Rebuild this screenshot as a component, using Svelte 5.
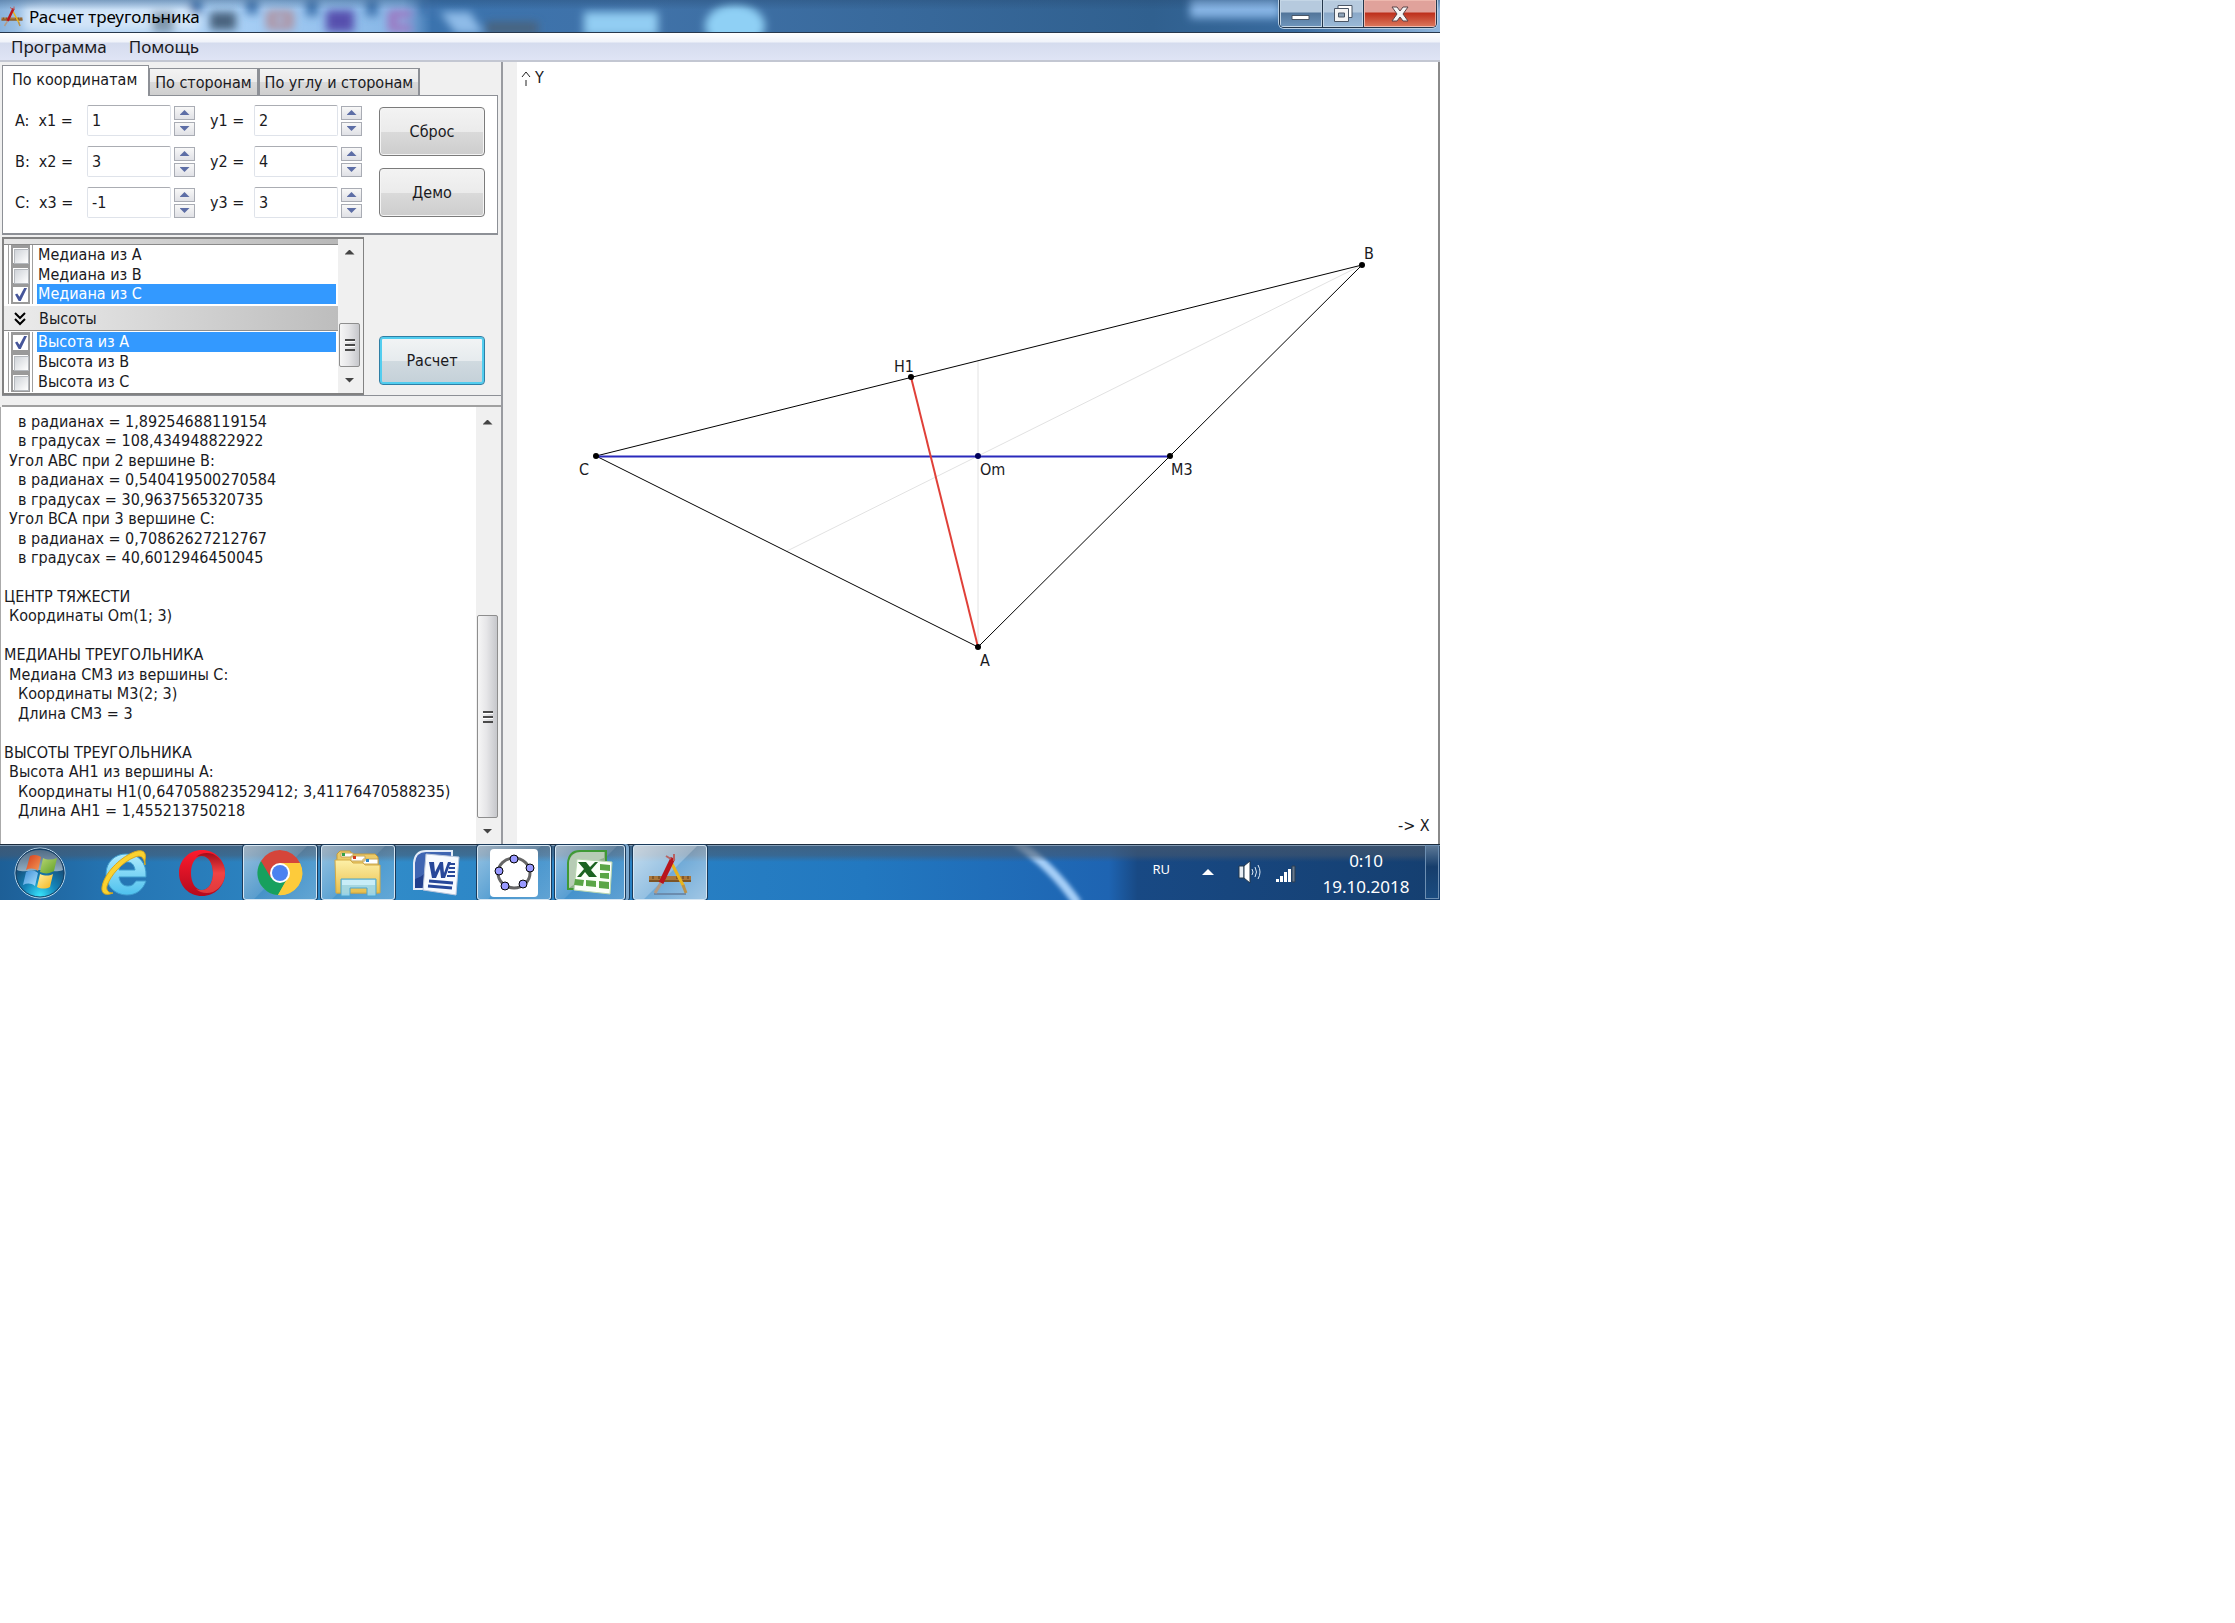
<script>
  const points = [
    { name: 'A', index: 1, x: '1', y: '2' },
    { name: 'B', index: 2, x: '3', y: '4' },
    { name: 'C', index: 3, x: '-1', y: '3' }
  ];

  const medians = [
    { text: 'Медиана из A', on: false },
    { text: 'Медиана из B', on: false },
    { text: 'Медиана из C', on: true }
  ];

  const heights = [
    { text: 'Высота из A', on: true },
    { text: 'Высота из B', on: false },
    { text: 'Высота из C', on: false }
  ];

  const report = [
    [2, 'в радианах = 1,89254688119154'],
    [2, 'в градусах = 108,434948822922'],
    [1, 'Угол ABC при 2 вершине B:'],
    [2, 'в радианах = 0,540419500270584'],
    [2, 'в градусах = 30,9637565320735'],
    [1, 'Угол BCA при 3 вершине C:'],
    [2, 'в радианах = 0,70862627212767'],
    [2, 'в градусах = 40,6012946450045'],
    [0, ''],
    [0, 'ЦЕНТР ТЯЖЕСТИ'],
    [1, 'Координаты Om(1; 3)'],
    [0, ''],
    [0, 'МЕДИАНЫ ТРЕУГОЛЬНИКА'],
    [1, 'Медиана CM3 из вершины C:'],
    [2, 'Координаты M3(2; 3)'],
    [2, 'Длина CM3 = 3'],
    [0, ''],
    [0, 'ВЫСОТЫ ТРЕУГОЛЬНИКА'],
    [1, 'Высота AH1 из вершины A:'],
    [2, 'Координаты H1(0,647058823529412; 3,41176470588235)'],
    [2, 'Длина AH1 = 1,455213750218']
  ];

  const dots = [
    { x: 596, y: 455, label: 'C', lx: 579, ly: 474 },
    { x: 911, y: 376, label: 'H1', lx: 894, ly: 371 },
    { x: 978, y: 455, label: 'Om', lx: 980, ly: 474 },
    { x: 978, y: 646, label: 'A', lx: 980, ly: 665 },
    { x: 1362, y: 264, label: 'B', lx: 1364, ly: 258 },
    { x: 1170, y: 455, label: 'M3', lx: 1171, ly: 474 }
  ];
</script>

{#snippet ladder()}
  <path d="M3 27h42v6H3z" fill="#a9773c" />
  <path d="M3 31h42v2H3z" fill="#7c5426" />
  <path d="M7 27v3M13 27v3M19 27v3M31 27v3M37 27v3M42 27v3" stroke="#5e3d18" stroke-width="1" />
  <path d="M26 15L38 38" stroke="#e9b41c" stroke-width="3" />
  <path d="M37 36l3 8" stroke="#b9914a" stroke-width="3" />
  <path d="M27 9L15 34" stroke="#b8151d" stroke-width="5" />
  <path d="M15 34l-6 10" stroke="#b39b86" stroke-width="3" />
  <path d="M20 7l5 3M28 5v7" stroke="#b86262" stroke-width="2" />
{/snippet}

{#snippet spin(name)}
  <span class="spin">
    <button type="button" aria-label={`${name} +`}><i class="up"></i></button>
    <button type="button" aria-label={`${name} −`}><i class="down"></i></button>
  </span>
{/snippet}

{#snippet checkRow(item)}
  <label class="check" class:on={item.on}>
    <span class="box"><input type="checkbox" checked={item.on} /></span>
    <span class="name">{item.text}</span>
  </label>
{/snippet}

<div class="page">
  <div class="screen">
    <header class="title">
      <svg class="wall" viewBox="0 0 1440 32" preserveAspectRatio="none" aria-hidden="true">
        <defs>
          <linearGradient id="sky">
            <stop offset="0" stop-color="#8ab3dc" />
            <stop offset="0.03" stop-color="#b3d2f1" />
            <stop offset="0.16" stop-color="#a9d0f6" />
            <stop offset="0.28" stop-color="#86b6e6" />
            <stop offset="0.3" stop-color="#3b73ae" />
            <stop offset="0.45" stop-color="#4072a8" />
            <stop offset="0.8" stop-color="#30608f" />
            <stop offset="0.9" stop-color="#386a9e" />
            <stop offset="1" stop-color="#8fb5dc" />
          </linearGradient>
          <linearGradient id="shade" x2="0" y2="1">
            <stop offset="0" stop-color="#274b73" stop-opacity="0.4" />
            <stop offset="0.3" stop-color="#274b73" stop-opacity="0" />
          </linearGradient>
          <filter id="soft" x="-5%" y="-60%" width="110%" height="220%"><feGaussianBlur stdDeviation="4" /></filter>
        </defs>
        <path d="M0 0h1440v32H0z" fill="url(#sky)" />
        <g filter="url(#soft)">
          <path d="M24 6h176v24H24z" fill="#d3e5f8" />
          <path d="M152 12h22v20h-22z" fill="#8199ae" />
          <path d="M210 12h26v18h-26z" fill="#48647e" />
          <path d="M270 14h20v12h-20z" fill="none" stroke="#b08f9c" stroke-width="7" />
          <path d="M326 10h28v22h-28z" fill="#564fae" />
          <path d="M412 14h-20v14h20" fill="none" stroke="#9d74c0" stroke-width="8" />
          <path d="M190 0h12v14h-12zM246 0h12v14h-12zM306 0h12v16h-12zM366 0h12v16h-12zM420 0h14v14h-14z" fill="#3f73ad" />
          <path d="M440 12h30l14 22h-28z" fill="#8ebbe8" />
          <path d="M486 22h52v12h-52z" fill="#4a647e" />
          <path d="M584 12h74v24h-74z" fill="#92cdf3" />
          <ellipse cx="735" cy="26" rx="30" ry="22" fill="#8fd0f5" />
          <path d="M1190 -4h90v22h-90z" fill="#86b4e4" />
        </g>
        <path d="M0 0h1440v32H0z" fill="url(#shade)" />
      </svg>
      <svg class="app" viewBox="0 0 48 48" aria-hidden="true">{@render ladder()}</svg>
      <h1>Расчет треугольника</h1>
      <div class="caption">
        <button type="button" class="min" aria-label="Свернуть">
          <svg viewBox="0 0 22 20"><path d="M2 11.500h17v4H2z" fill="#fff" stroke="#4a5666" /></svg>
        </button>
        <button type="button" class="max" aria-label="Восстановить">
          <svg viewBox="0 0 22 20">
            <path d="M6 1.500h14v12H6z" fill="#fff" stroke="#4a5666" />
            <path d="M2.500 4.500h14v13h-14z" fill="#f4f4f4" stroke="#4a5666" />
            <path d="M6.500 9h6v4h-6z" fill="#8ea3b8" stroke="#4a5666" />
          </svg>
        </button>
        <button type="button" class="close" aria-label="Закрыть">
          <svg viewBox="0 0 22 20"><path d="M3 3h5l3 4 3-4h5l-5 7 5 7h-5l-3-4-3 4H3l5-7z" fill="#f4f4f4" stroke="#5c4448" /></svg>
        </button>
      </div>
    </header>

    <nav class="menu">
      <button type="button">Программа</button>
      <button type="button">Помощь</button>
    </nav>

    <main>
      <section class="side">
        <div class="tabs" role="tablist">
          <button type="button" role="tab" aria-selected="true" class="active">По координатам</button>
          <button type="button" role="tab" aria-selected="false">По сторонам</button>
          <button type="button" role="tab" aria-selected="false">По углу и сторонам</button>
        </div>

        <form class="coords">
          <div class="rows">
            {#each points as p}
              <div class="row">
                <label for={`x${p.index}`}><span>{p.name}:</span><span>x{p.index} =</span></label>
                <input id={`x${p.index}`} type="text" value={p.x} />
                {@render spin(`x${p.index}`)}
                <label class="second" for={`y${p.index}`}>y{p.index} =</label>
                <input id={`y${p.index}`} type="text" value={p.y} />
                {@render spin(`y${p.index}`)}
              </div>
            {/each}
          </div>
          <div class="actions">
            <button type="reset" class="push">Сброс</button>
            <button type="button" class="push">Демо</button>
          </div>
        </form>

        <div class="options">
          <div class="list">
            <div class="items">
              <div class="strip"></div>
              {#each medians as item}{@render checkRow(item)}{/each}
              <div class="group">
                <svg viewBox="0 0 12 14" aria-hidden="true"><path d="M1 1l5 5 5-5M1 7l5 5 5-5" fill="none" stroke="#000" stroke-width="2" /></svg>
                <span>Высоты</span>
              </div>
              {#each heights as item}{@render checkRow(item)}{/each}
            </div>
            <div class="scroll">
              <button type="button" aria-label="Вверх"><i class="up"></i></button>
              <span class="track"><span class="thumb short"><i class="grip"></i></span></span>
              <button type="button" aria-label="Вниз"><i class="down"></i></button>
            </div>
          </div>
          <button type="button" class="push primary">Расчет</button>
        </div>

        <div class="bar"></div>

        <div class="output">
          <div class="lines">
            {#each report as [level, text]}
              <p class={`l${level}`}>{text}</p>
            {/each}
          </div>
          <div class="scroll">
            <button type="button" aria-label="Вверх"><i class="up"></i></button>
            <span class="track"><span class="thumb long"><i class="grip"></i></span></span>
            <button type="button" aria-label="Вниз"><i class="down"></i></button>
          </div>
        </div>
      </section>

      <div class="splitter"></div>

      <section class="plot">
        <svg viewBox="517 61 921 782" preserveAspectRatio="xMinYMin meet" role="img" aria-label="Треугольник ABC">
          <g fill="none" stroke-width="1">
            <path d="M978 646V359M1362 264L787 550" stroke="#e2e2e2" />
            <path d="M596 455L1362 264L978 646Z" stroke="#000" />
            <path d="M596 455.500H1170" stroke="#2a2abc" stroke-width="2" />
            <path d="M911 376L978 646" stroke="#e04038" stroke-width="2" />
          </g>
          {#each dots as d}
            <circle cx={d.x} cy={d.y} r="3" fill={d.label === 'Om' ? '#00005a' : '#000'} />
            <text x={d.lx} y={d.ly}>{d.label}</text>
          {/each}
          <path d="M522 76l4-5 4 5M526 79v6" fill="none" stroke="#222" stroke-width="1" />
          <text x="535" y="82">Y</text>
          <text x="1398" y="830">-&gt; X</text>
        </svg>
      </section>
    </main>

    <footer class="taskbar">
      <svg class="wall" viewBox="0 844 1440 56" preserveAspectRatio="none" aria-hidden="true">
        <defs>
          <linearGradient id="desk">
            <stop offset="0" stop-color="#1d5f97" />
            <stop offset="0.08" stop-color="#2575b3" />
            <stop offset="0.25" stop-color="#318cc9" />
            <stop offset="0.6" stop-color="#2278c0" />
            <stop offset="0.77" stop-color="#1e64b2" />
            <stop offset="0.79" stop-color="#184984" />
            <stop offset="1" stop-color="#153f70" />
          </linearGradient>
          <linearGradient id="haze" x2="0" y2="1">
            <stop offset="0" stop-color="#48586c" stop-opacity="0.75" />
            <stop offset="0.2" stop-color="#48586c" stop-opacity="0.55" />
            <stop offset="0.32" stop-color="#48586c" stop-opacity="0" />
          </linearGradient>
          <filter id="streak" x="-30%" y="-30%" width="160%" height="160%"><feGaussianBlur stdDeviation="2" /></filter>
        </defs>
        <path d="M0 844h1440v56H0z" fill="url(#desk)" />
        <path d="M1016 842Q1052 866 1078 904" fill="none" stroke="#a6cff8" stroke-width="9" filter="url(#streak)" />
        <path d="M0 844h1440v56H0z" fill="url(#haze)" />
        <path d="M0 844.500h1440" stroke="#1c2c3e" />
        <path d="M0 845.500h1440" stroke="#9fb6cc" stroke-opacity="0.7" />
      </svg>

      <button type="button" class="start" aria-label="Пуск">
        <svg viewBox="0 0 52 52">
          <defs>
            <radialGradient id="orb" cx="0.5" cy="0.95" r="0.75">
              <stop offset="0" stop-color="#38e4fb" />
              <stop offset="0.45" stop-color="#1583b8" />
              <stop offset="1" stop-color="#16436c" />
            </radialGradient>
            <linearGradient id="gloss" x2="0" y2="1"><stop offset="0" stop-color="#6b7f92" /><stop offset="1" stop-color="#c3d3df" /></linearGradient>
            <linearGradient id="flagr" x2="1" y2="1"><stop offset="0" stop-color="#d33c1c" /><stop offset="1" stop-color="#f59a56" /></linearGradient>
            <linearGradient id="flagg" x2="1" y2="1"><stop offset="0" stop-color="#b7d671" /><stop offset="1" stop-color="#5f9f26" /></linearGradient>
            <linearGradient id="flagb" x2="1" y2="1"><stop offset="0" stop-color="#3d8ed6" /><stop offset="1" stop-color="#a9e0ff" /></linearGradient>
            <linearGradient id="flagy" x2="1" y2="1"><stop offset="0" stop-color="#fff0a0" /><stop offset="1" stop-color="#f4b41c" /></linearGradient>
          </defs>
          <circle cx="26" cy="26" r="25" fill="url(#orb)" stroke="#bcd7ea" />
          <circle cx="26" cy="26" r="24" fill="none" stroke="#173f63" />
          <path d="M3 23C4 10 14 3 26 3s22 7 23 20c-8 3-15 0-23 0s-16 3-23 0z" fill="url(#gloss)" opacity="0.7" />
          <path d="M16 9c4-2 8-1 11 1l-3 14c-4-3-8-3-12-1z" fill="url(#flagr)" />
          <path d="M29 11c4 2 9 2 14 0l-3 13c-5 3-9 3-14 1z" fill="url(#flagg)" />
          <path d="M12 25c4-2 8-2 12 1l-3 13c-4-3-8-3-12-1z" fill="url(#flagb)" />
          <path d="M26 27c5 2 9 2 13 0l-3 13c-4 2-9 2-13 0z" fill="url(#flagy)" />
        </svg>
      </button>

      <div class="tasks">
        <button type="button" aria-label="Internet Explorer">
          <svg viewBox="0 0 48 48">
            <defs><linearGradient id="ie" x2="0" y2="1"><stop offset="0" stop-color="#aeeafd" /><stop offset="1" stop-color="#4ec1ee" /></linearGradient></defs>
            <path fill-rule="evenodd" d="M26 5c12 0 21 8 20 23H19c1 6 4 9 9 9 4 0 6-2 8-5h10c-3 9-10 14-19 14C15 46 6 37 6 25S15 5 26 5zM19 21h16c-1-6-4-8-8-8s-7 2-8 8z" fill="url(#ie)" stroke="#3f9ccd" stroke-width="1" />
            <path d="M13 44C6 47 1 45 2 38 4 25 19 9 34 3c8-3 13-1 11 8v5c-1-9-5-10-10-8C22 13 10 27 7 37c-1 4 1 7 6 7z" fill="#fbd22f" stroke="#d8a81e" stroke-width="1" />
          </svg>
        </button>
        <button type="button" aria-label="Opera">
          <svg viewBox="0 0 48 48">
            <defs>
              <linearGradient id="op" x2="0" y2="1"><stop offset="0" stop-color="#ff1b2d" /><stop offset="1" stop-color="#b40a1e" /></linearGradient>
              <linearGradient id="op2" x2="0" y2="1"><stop offset="0" stop-color="#a30d1a" /><stop offset="0.5" stop-color="#f24344" /><stop offset="1" stop-color="#e03a3c" /></linearGradient>
            </defs>
            <path fill-rule="evenodd" d="M24 1c13 0 23 10 23 23S37 47 24 47 1 37 1 24 11 1 24 1zm0 6c-7 0-11 8-11 17s4 17 11 17 11-8 11-17S31 7 24 7z" fill="url(#op)" />
            <path d="M18 8c4-4 11-5 17-3 8 4 12 11 12 19s-4 15-12 19c-6 2-13 1-17-3 2 1 4 1 6 1 7 0 11-8 11-17S31 7 24 7c-2 0-4 0-6 1z" fill="url(#op2)" />
          </svg>
        </button>
        <button type="button" class="open" aria-label="Google Chrome">
          <svg viewBox="0 0 48 48">
            <circle cx="24" cy="24" r="22" fill="#fdcb3b" />
            <path d="M24 24L5 12A22 22 0 0 0 22 46l10-17z" fill="#17a05e" />
            <path d="M24 14l20 0a22 22 0 0 1-22 32l10-18z" fill="#fdcb3b" />
            <path d="M24 14H44A22 22 0 0 0 5 12l10 17z" fill="#d5453a" />
            <circle cx="24" cy="24" r="10" fill="#fff" />
            <circle cx="24" cy="24" r="8" fill="#4c82f0" />
          </svg>
        </button>
        <button type="button" class="open" aria-label="Проводник">
          <svg viewBox="0 0 48 48">
            <defs><linearGradient id="fold" x2="0" y2="1"><stop offset="0" stop-color="#fdf0a8" /><stop offset="1" stop-color="#e9bf4c" /></linearGradient></defs>
            <path d="M3 5l3-3h10l2 3h23l3 3v36H3z" fill="#eccb68" stroke="#c59b3c" />
            <path d="M7 4h12v4H7zM17 7h14v5H17zM29 10h15v5H29z" fill="#fff" stroke="#c7a85a" stroke-width="1" />
            <path d="M8 4h3v3H8z" fill="#35a14a" /><path d="M19 7h3v3h-3z" fill="#d0391f" /><path d="M32 10h3v3h-3z" fill="#2e86c9" />
            <path d="M1 11h15l3 3h10l2 2h15v28H2z" fill="url(#fold)" stroke="#d3aa45" />
            <path d="M7 30h35v17h-9v-8H16v8H7z" fill="#9cd8ee" fill-opacity="0.9" stroke="#4ca5cc" />
            <path d="M8 31h33v5H8z" fill="#c8edf7" />
          </svg>
        </button>
        <button type="button" aria-label="Word">
          <svg viewBox="0 0 48 48">
            <path d="M2 40V14Q3 2 14 2h26v12H18v26z" fill="#3f65b2" stroke="#e4ecf8" stroke-width="2" />
            <path d="M3 30Q16 26 18 12v27H3z" fill="#213f8d" />
            <path d="M14 5l33 3-3 38-33-5z" fill="#f7faff" stroke="#b9c6dc" />
            <path d="M17 13h5l1 10 5-10h3l1 11 4-11h3l-6 16h-4l-1-9-4 9h-4z" fill="#27479a" />
            <path d="M37 15h6M37 19h6M36 23h7M35 27h8" stroke="#27479a" stroke-width="2" />
            <path d="M17 32l24 2M16 37l24 2" stroke="#27479a" stroke-width="3" />
          </svg>
        </button>
        <button type="button" class="open" aria-label="GeoGebra">
          <svg viewBox="0 0 48 48">
            <rect width="48" height="48" rx="4" fill="#fff" />
            <ellipse cx="24" cy="24" rx="16" ry="15" fill="none" stroke="#666" stroke-width="3" />
            <g fill="#9999ff" stroke="#000" stroke-width="1">
              <circle cx="24" cy="10" r="4" /><circle cx="40" cy="19" r="4" /><circle cx="33" cy="35" r="4" /><circle cx="15" cy="37" r="4" /><circle cx="9" cy="22" r="4" />
            </g>
          </svg>
        </button>
        <button type="button" class="open stacked" aria-label="Excel">
          <svg viewBox="0 0 48 48">
            <path d="M2 40V14Q3 2 14 2h26v12H18v26z" fill="#8fae8c" stroke="#3f9a35" stroke-width="2" />
            <path d="M3 12Q6 3 15 3h23v6Q26 12 16 30L3 39z" fill="#dfe9de" opacity="0.5" />
            <path d="M11 10l35 3-2 32-36-4z" fill="#fbfff8" stroke="#b9d8b2" />
            <path d="M34 15l10 1v6l-10-1zM34 24h9v6l-9-1zM33 32l10 1v7l-10-1zM20 31l10 1v6l-10-1zM9 30l9 1-1 6-9-1z" fill="#5aa646" />
            <path d="M12 13h8l4 5 5-5h3l-7 8 6 7h-8l-4-5-4 5h-4l7-8z" fill="#1c6320" />
          </svg>
        </button>
        <button type="button" class="open current" aria-label="Расчет треугольника">
          <svg viewBox="0 0 48 48"><path d="M8 45h32" stroke="#6b8cae" stroke-width="2" />{@render ladder()}</svg>
        </button>
      </div>

      <div class="tray">
        <span class="lang">RU</span>
        <button type="button" aria-label="Скрытые значки">
          <svg class="more" viewBox="0 0 12 10"><path d="M0 8l6-6 6 6z" fill="#fff" /></svg>
        </button>
        <svg class="sound" viewBox="0 0 24 24" aria-hidden="true">
          <path d="M1 6h5v12H1z" fill="#e8eef4" stroke="#24384c" /><path d="M6 6l6-5v22l-6-5z" fill="#fff" stroke="#24384c" />
          <path d="M14 9q2 3 0 6M17 7q3 5 0 10M20 5q4 7 0 14" fill="none" stroke="#dce9f5" stroke-width="1" />
        </svg>
        <svg class="signal" viewBox="0 0 22 20" aria-hidden="true">
          <path d="M1 15h3v3H1zM5 12h3v6H5zM9 8h3v10H9zM13 5h3v13h-3z" fill="#fff" />
          <path d="M17 2h3v16h-3z" fill="#66788c" stroke="#2a3c50" />
        </svg>
        <div class="clock"><time>0:10</time><time>19.10.2018</time></div>
        <button type="button" class="peek" aria-label="Свернуть все окна"></button>
      </div>
    </footer>
  </div>
</div>

<style>
  :global(body) { background: #fff; }
  .page {
    display: grid;
    grid-template-columns: 1440fr 795fr;
    align-items: start;
    font-family: "DejaVu Sans Condensed", "DejaVu Sans", sans-serif;
    font-size: 16px;
    line-height: 18px;
    color: #1a1a1e;
  }
  .page * { box-sizing: border-box; }
  button { font: inherit; color: inherit; margin: 0; padding: 0; border: 0; background: none; }
  .screen { display: flex; flex-direction: column; min-width: 0; aspect-ratio: 8 / 5; }
  .wall { position: absolute; inset: 0; width: 100%; height: 100%; z-index: -1; }

  .title {
    position: relative; z-index: 0; display: flex; align-items: center; height: 33px; padding-right: 3px;
    border-bottom: 1px solid #27384d;
    font: 17px/24px "Noto Sans", "Open Sans", sans-serif; color: #000;
  }
  .app { width: 24px; height: 24px; }
  h1 { margin: 2px 0 0 5px; font: inherit; flex: 1; }
  .caption { display: flex; align-self: flex-start; height: 28px; border: 1px solid #24364a; border-top: 0; border-radius: 0 0 5px 5px; overflow: hidden; box-shadow: 0 0 0 1px #b9cfe4; }
  .caption button { display: grid; place-items: center; width: 43px; border-right: 1px solid #24364a; background: linear-gradient(#b6cade 0 12px, #52759a 13px, #6f96bd); box-shadow: inset 0 0 0 1px #c4d6e6; }
  .caption .max { width: 41px; background: linear-gradient(#b6cade 0 12px, #8aa8c8 13px, #9bbad8); }
  .caption .close { width: 72px; border: 0; background: linear-gradient(#e0a29b 0 12px, #bd2f1b 13px, #dc7a5e); box-shadow: inset 0 0 0 1px #edb8ae; }
  .caption svg { width: 22px; height: 20px; }

  .menu {
    display: flex; gap: 22px; height: 29px; padding: 1px 11px 0;
    border-bottom: 2px solid #c3c7d2;
    background: linear-gradient(#fff, #f0f3fa 9px, #d5dcee 10px, #dfe4f5);
    font: 17px/26px "Noto Sans", "Open Sans", sans-serif;
  }

  main { display: grid; grid-template-columns: 503fr 14fr 923fr; grid-template-rows: minmax(0, 1fr); flex: 1; min-height: 0; }
  .side { display: flex; flex-direction: column; min-width: 0; padding: 3px 0 0 2px; border-right: 2px solid #999ba0; background: #f0f0f0; }
  .splitter { background: #f0f0f0; }
  .plot { min-width: 0; border-right: 2px solid #8a8a8a; background: #fff; }
  .plot svg { display: block; width: 100%; height: auto; }
  .plot text { fill: #1a1a1e; font-size: 16px; }

  .tabs { display: flex; align-items: flex-end; height: 30px; }
  .tabs button { height: 27px; padding: 2px 5px 0; border: 1px solid #8d9096; border-width: 1px 2px 0 1px; background: linear-gradient(#f3f3f3, #ebebeb 50%, #dadada 51%, #cfcfcf); white-space: nowrap; }
  .tabs .active { position: relative; height: 31px; margin-bottom: -1px; padding: 0 11px 2px 9px; border-width: 1px 1px 0; background: #fff; }

  .coords { display: flex; justify-content: space-between; margin-right: 3px; height: 140px; padding: 9px 12px 0 12px; border: 1px solid #8d9096; border-bottom-width: 2px; background: #fff; }
  .rows { display: flex; flex-direction: column; gap: 10px; }
  .row { display: grid; grid-template-columns: 69px 84px 21px 53px 84px 21px; column-gap: 3px; align-items: center; height: 31px; }
  .row label { display: flex; gap: 9px; white-space: nowrap; }
  .row .second { padding-left: 12px; }
  .row input { width: 100%; height: 31px; padding: 0 4px; border: 1px solid #dfe3ea; border-top-color: #abadb3; border-radius: 2px; background: #fff; font: inherit; color: #1a1a1e; }
  .spin { display: flex; flex-direction: column; gap: 2px; }
  .spin button { display: grid; place-items: center; width: 21px; height: 14px; border: 1px solid #a9acb4; background: linear-gradient(#f8f8f8, #e0e1e6); }
  i { display: block; }
  .up, .down { width: 10px; height: 5px; background: #5d6ea6; clip-path: polygon(50% 0, 100% 100%, 0 100%); }
  .down { clip-path: polygon(0 0, 100% 0, 50% 100%); }
  .actions { display: flex; flex-direction: column; gap: 12px; padding-top: 2px; }
  .push { width: 106px; height: 49px; border: 1px solid #7b7b7b; border-radius: 4px; background: linear-gradient(#f3f3f3, #ebebeb 50%, #dadada 51%, #cdcdcd); box-shadow: inset 0 0 0 1px #f4f4f4; }
  .primary { margin: 0 16px 10px 0; border-color: #2f7fa5; background: linear-gradient(#f2f4f5, #e6ebee 50%, #d0dae0 51%, #c4d0d8); box-shadow: inset 0 0 0 2px #52cdef; }

  .options { display: flex; justify-content: space-between; align-items: flex-end; margin-top: 2px; border-bottom: 1px solid #8d9096; }
  .list { display: flex; width: 362px; height: 158px; border: 2px solid #828282; border-width: 2px 1px 2px 2px; background: #fff; }
  .items { flex: 1; min-width: 0; }
  .strip { height: 6px; background: linear-gradient(90deg, #e6e6e6, #b8b8b8); border-bottom: 1px solid #8a8a8a; }
  .check { display: flex; align-items: stretch; height: 20px; }
  .check:nth-of-type(2) { height: 19px; }
  .box { display: grid; place-items: center; width: 25px; margin: 0 4px; border: solid #a0a0a0; border-width: 0 1px; }
  .box input { appearance: none; display: block; width: 19px; height: 20px; margin: 0; border: 2px solid #9a9a9a; border-top-width: 3px; background: #fff; padding: 1px; }
  .box input::before { content: ""; display: block; width: 13px; height: 13px; border: 1px solid #b4b8bd; background: linear-gradient(135deg, #cfd3d8, #fff); }
  .box input:checked::before { background: #46569a; border: 0; clip-path: polygon(8% 50%, 25% 42%, 42% 68%, 78% 0, 100% 0, 52% 100%, 36% 100%); }
  .name { flex: 1; margin-right: 2px; padding-left: 1px; line-height: 20px; }
  .on .name { background: #3399ff; color: #fff; }
  .group { display: flex; align-items: center; gap: 13px; height: 28px; padding-left: 10px; border: solid #fff; border-width: 2px 0 1px; background: linear-gradient(90deg, #ececec, #bdbdbd); box-shadow: inset 0 -1px #8e8e8e; }
  .group svg { width: 12px; height: 14px; }

  .scroll { display: flex; flex-direction: column; width: 25px; padding: 0 3px 0 1px; background: #f0f0f0; }
  .scroll button { display: grid; place-items: center; height: 26px; }
  .scroll .up, .scroll .down { background: #444; }
  .track { display: flex; flex-direction: column; flex: 1; }
  .thumb { display: grid; place-items: center; border: 1px solid #8e8e8e; border-radius: 2px; background: linear-gradient(90deg, #f6f6f6, #e6e6e8 45%, #c6c7cb); }
  .short { height: 44px; margin-top: auto; }
  .long { height: 53%; margin-top: auto; }
  .grip { width: 10px; height: 12px; background: repeating-linear-gradient(#4a4a4a 0 2px, #fff 2px 3px, transparent 3px 5px); }

  .bar { height: 11px; border-bottom: 2px solid #a0a0a0; background: #f0f0f0; }
  .output { display: flex; flex: 1; min-height: 0; margin-left: -2px; border-left: 1px solid #aaa; background: #fff; }
  .output .scroll { padding-top: 2px; }
  .lines { display: flex; flex-direction: column; flex: 1; min-width: 0; padding: 5px 0 23px 3px; }
  .lines p { display: flex; align-items: center; flex: 1; min-height: 0; margin: 0; white-space: nowrap; }
  .lines .l1 { padding-left: 5px; }
  .lines .l2 { padding-left: 14px; }

  .taskbar { position: relative; z-index: 0; display: flex; align-items: stretch; height: 56px; color: #fff; font-family: "Noto Sans", "Open Sans", sans-serif; }
  .start { display: grid; place-items: center; width: 87px; padding: 2px 7px 0 0; }
  .start svg { width: 52px; height: 52px; }
  .tasks { display: flex; gap: 4px; flex: 1; padding-top: 1px; }
  .tasks button { display: grid; place-items: center; width: 74px; border: 1px solid transparent; border-radius: 3px; }
  .tasks svg { width: 48px; height: 48px; }
  .tasks .open { border-color: #d5e6f3; background: linear-gradient(135deg, #ffffff80, #ffffff38 50%, #ffffff20 51%, #ffffff40); box-shadow: 0 0 0 1px #1a3a5a; }
  .tasks .stacked { width: 70px; margin-right: 4px; box-shadow: 0 0 0 1px #1a3a5a, 3px 0 0 1px #7ea9ce, 4px 0 0 1px #1a3a5a; }
  .tasks .current { background: linear-gradient(135deg, #ffffffb8, #ffffff80 50%, #ffffff58 51%, #ffffff90); }
  .tray { display: flex; align-items: center; }
  .lang { font-size: 13px; line-height: 18px; margin: 0 32px 6px 0; }
  .tray svg { display: block; }
  .more { width: 12px; height: 10px; }
  .sound { width: 24px; height: 24px; margin-left: 24px; }
  .signal { width: 22px; height: 20px; margin: 4px 0 0 13px; }
  .clock { display: flex; flex-direction: column; align-items: center; width: 126px; padding: 4px 0 0 12px; font-size: 17px; line-height: 26px; }
  .peek { width: 14px; align-self: stretch; margin: 1px 1px 1px 2px; border: 1px solid #6d8fb2; background: linear-gradient(#5c7896, #163e6c 40%, #1b4c80); }
</style>
